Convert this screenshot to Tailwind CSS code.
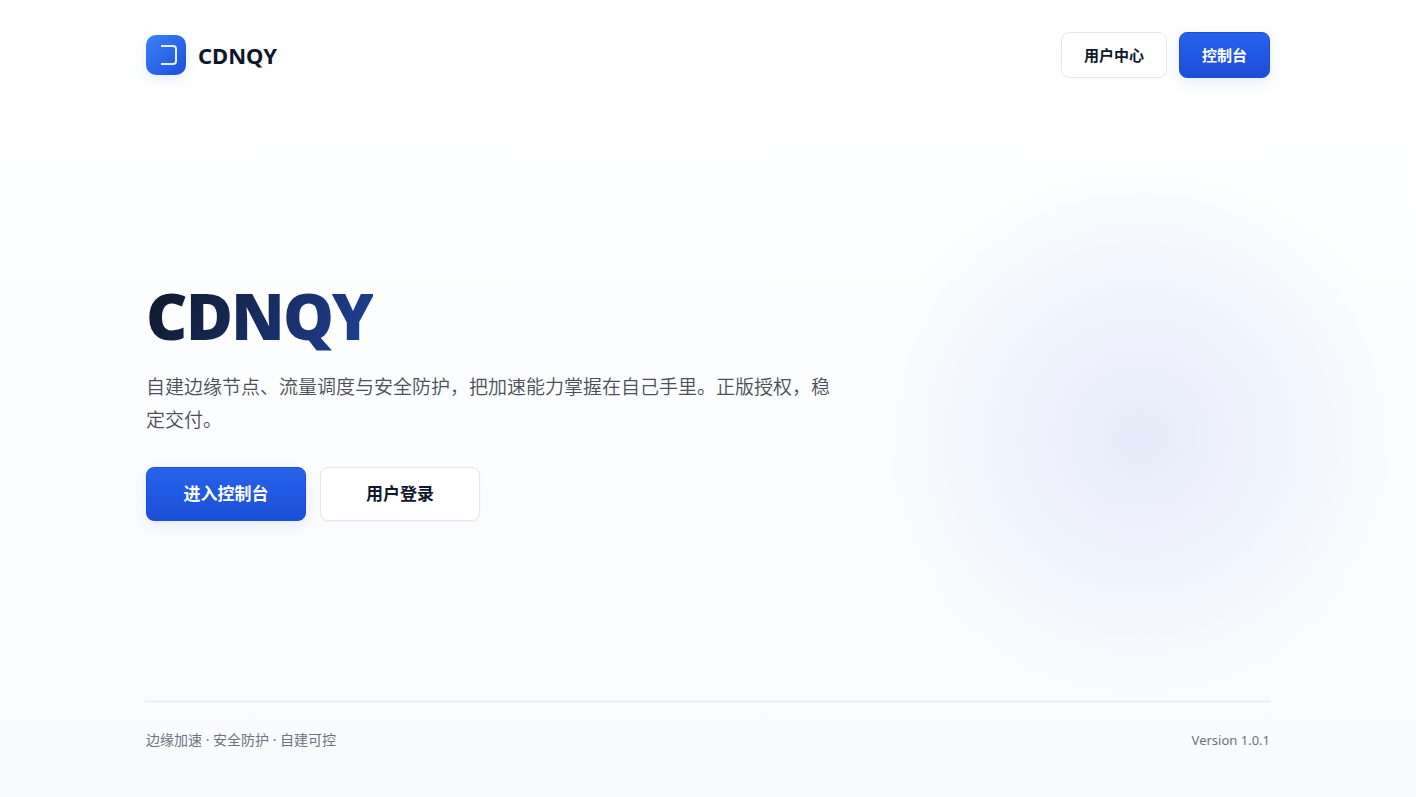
<!DOCTYPE html>
<html lang="zh-CN">
<head>
    <meta charset="UTF-8">
    <meta name="viewport" content="width=device-width, initial-scale=1.0">
    <title>CDNQY</title>
    <script src="https://cdn.jsdelivr.net/npm/@tailwindcss/browser@4"></script>
</head>
<body class="relative min-h-screen overflow-x-hidden bg-linear-to-b from-white via-[#fcfdfe] to-[#f9fafc] font-['Noto_Sans','Noto_Sans_CJK_SC',sans-serif] text-[#0f172a]">
    <!-- background glow -->
    <div class="absolute top-[168px] right-[6px] size-[540px] rounded-full bg-[radial-gradient(closest-side,#e5ebf8_0%,#ebeefb_22%,#eff3fd_48%,#f4f8fe_70%,#f9fafd_88%,transparent_100%)]" aria-hidden="true"></div>

    <div class="relative mx-auto flex min-h-screen max-w-[1180px] flex-col px-7">
        <header class="flex items-center justify-between py-8">
            <a href="#" class="flex items-center gap-3">
                <span class="flex size-10 items-center justify-center rounded-[10px] bg-linear-to-br from-[#3b82f6] to-[#1d4ed8] shadow-[0_4px_12px_rgba(37,99,235,0.12)]">
                    <svg class="size-10" viewBox="0 0 40 40" fill="none" stroke="#e8f1ff" stroke-width="2" xmlns="http://www.w3.org/2000/svg">
                        <path d="M15 11h12q3 0 3 3v12q0 3-3 3H15"></path>
                    </svg>
                </span>
                <span class="text-[22px] leading-8 font-bold">CDNQY</span>
            </a>
            <nav class="flex gap-3">
                <button type="button" class="h-[46px] rounded-lg border border-gray-200 bg-white px-[22px] text-[15px] font-bold">用户中心</button>
                <button type="button" class="h-[46px] rounded-lg border border-[#1d4ed8] bg-linear-to-b from-[#2563eb] to-[#1d4ed8] px-[22px] text-[15px] font-bold text-white shadow-[0_4px_14px_rgba(37,99,235,0.12)]">控制台</button>
            </nav>
        </header>

        <main class="flex flex-1 flex-col justify-center pb-[10px]">
            <h1 class="w-fit bg-linear-120 from-[#0f172a] to-[#1e429a] bg-clip-text text-[64px] leading-[70px] font-black tracking-tight text-transparent">CDNQY</h1>
            <p class="mt-5 max-w-[700px] text-[19px] leading-[33px] font-[350] text-[#4b5058]">自建边缘节点、流量调度与安全防护，把加速能力掌握在自己手里。正版授权，稳定交付。</p>
            <div class="mt-[30px] flex flex-wrap gap-[14px]">
                <button type="button" class="h-[54px] min-w-40 rounded-lg border border-[#1d4ed8] bg-linear-to-b from-[#2563eb] to-[#1d4ed8] px-7 text-[17px] font-bold text-white shadow-[0_4px_14px_rgba(37,99,235,0.12)]">进入控制台</button>
                <button type="button" class="h-[54px] min-w-40 rounded-lg border border-gray-200 bg-white px-7 text-[17px] font-bold shadow-[0_1px_2px_rgba(15,23,42,0.04)]">用户登录</button>
            </div>
        </main>

        <footer class="flex items-center justify-between border-t border-[#e5e7eb] pt-7 pb-[47px] text-[#6b7280]">
            <span class="text-sm">边缘加速 · 安全防护 · 自建可控</span>
            <span class="text-[13px] leading-5">Version 1.0.1</span>
        </footer>
    </div>
</body>
</html>
